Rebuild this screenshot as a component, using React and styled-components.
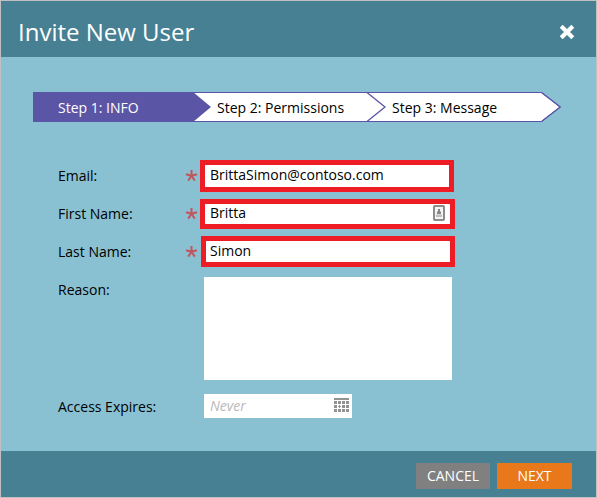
import React from "react";
import styled, { createGlobalStyle } from "styled-components";

const GlobalStyle = createGlobalStyle`
  * { box-sizing: border-box; }
  body { margin: 0; font-family: "Open Sans", "Noto Sans", sans-serif; font-size: 14px; color: #000; }
  button, input, textarea { font: inherit; }
`;

const Dialog = styled.div`
  width: 597px;
  height: 498px;
  border: 1px solid #c0c0c0;
  background: #89c1d2;
  display: flex;
  flex-direction: column;
  overflow: hidden;
`;

const Header = styled.header`
  height: 56px;
  flex: none;
  background: #468092;
  display: flex;
  align-items: center;
  justify-content: space-between;
  padding: 6px 21px 0 17px;
`;

const Title = styled.h1`
  margin: 0;
  font-size: 24px;
  line-height: 32px;
  font-weight: 400;
  color: #fff;
`;

const CloseButton = styled.button`
  width: 16px;
  height: 16px;
  padding: 0;
  border: 0;
  background: none;
  svg { display: block; }
`;

const Body = styled.main`
  flex: 1;
  padding: 35px 0 0 32px;
`;

const Steps = styled.ol`
  list-style: none;
  margin: 0 0 35px;
  padding: 0;
  height: 30px;
  width: 528px;
  display: grid;
  grid-template-columns: 159px 175px 194px;
  position: relative;
`;

const StepShape = styled.svg`
  position: absolute;
  inset: 0;
`;

const Step = styled.li`
  position: relative;
  padding-left: 25px;
  line-height: 31px;
  white-space: nowrap;
  color: ${(p) => (p.$active ? "#fff" : "#000")};
`;

const Form = styled.div`
  padding-left: 25px;
`;

const Row = styled.div`
  display: grid;
  grid-template-columns: 128px 14px 260px;
  height: ${(p) => p.$height || 38}px;
`;

const Label = styled.label`
  line-height: 38px;
`;

const Required = styled.svg`
  display: block;
  margin: 12px 0 0 -1px;
`;

const Outlined = styled.div`
  margin: ${(p) => p.$top}px 0 0 ${(p) => p.$left || 0}px;
  width: ${(p) => p.$width}px;
  height: ${(p) => p.$height}px;
  border: 5px solid #ee1c24;
  background: #fff;
  display: flex;
  justify-content: space-between;
  padding: 0 5px 0 ${(p) => 5 - (p.$left || 0)}px;
`;

const Value = styled.span`
  line-height: 20px;
  margin-top: ${(p) => p.$shift || 0}px;
`;

const Card = styled.svg`
  margin-top: 1px;
  flex: none;
`;

const Reason = styled.textarea`
  display: block;
  margin: 6px 0 0 4px;
  width: 248px;
  height: 103px;
  border: 0;
  background: #fff;
  resize: none;
  outline: 0;
`;

const DateField = styled.div`
  margin: 6px 0 0 4px;
  width: 148px;
  height: 24px;
  background: #fff;
  display: flex;
  justify-content: space-between;
  padding: 0 3px 0 6px;
  line-height: 24px;
  font-style: italic;
  color: #b9b9b9;
`;

const Calendar = styled.svg`
  margin-top: 4px;
`;

const Footer = styled.footer`
  height: 46px;
  flex: none;
  background: #468092;
  display: flex;
  justify-content: flex-end;
  gap: 7px;
  padding: 12px 24px 0 0;
`;

const Button = styled.button`
  width: ${(p) => p.$width}px;
  height: 26px;
  padding: 0;
  border: 0;
  background: ${(p) => (p.$primary ? "#e8781a" : "#808080")};
  color: #fff;
  line-height: 26px;
`;

const Star = () => (
  <Required width="13" height="14" viewBox="0 0 13 14">
    <path d="M6.5 6.8V.9M6.5 6.8L1 5.2M6.5 6.8L12 5.2M6.5 6.8L3.2 11.6M6.5 6.8L9.8 11.6" stroke="#c0555c" strokeWidth="2" fill="none" />
  </Required>
);

export default function App() {
  return (
    <>
      <GlobalStyle />
      <Dialog>
        <Header>
          <Title>Invite New User</Title>
          <CloseButton aria-label="Close">
            <svg width="16" height="16" viewBox="0 0 16 16">
              <path d="M3.7 3.7L12.3 12.3M12.3 3.7L3.7 12.3" stroke="#fff" strokeWidth="4.2" strokeLinecap="square" />
            </svg>
          </CloseButton>
        </Header>
        <Body>
          <Steps>
            <StepShape width="528" height="30" viewBox="0 0 528 30">
              <path d="M.5 .5H508.5L527.2 15L508.5 29.5H.5Z" fill="#fff" stroke="#5b55a5" />
              <path d="M334 .5L352 15L334 29.5M508.5 .5L527.2 15L508.5 29.5" fill="none" stroke="#5b55a5" strokeWidth="1.3" />
              <path d="M0 0H160L178 15L160 30H0Z" fill="#5b55a5" />
            </StepShape>
            <Step $active>Step 1: INFO</Step>
            <Step>Step 2: Permissions</Step>
            <Step>Step 3: Message</Step>
          </Steps>
          <Form>
            <Row>
              <Label>Email:</Label>
              <Star />
              <Outlined $top={3} $width={254} $height={32}>
                <Value>BrittaSimon@contoso.com</Value>
              </Outlined>
            </Row>
            <Row>
              <Label>First Name:</Label>
              <Star />
              <Outlined $top={4} $width={255} $height={30}>
                <Value $shift={-1}>Britta</Value>
                <Card width="12" height="16" viewBox="0 0 12 16">
                  <rect x="1" y="1" width="10" height="14" rx=".7" fill="#f4f4f4" stroke="#8c8c8c" strokeWidth="2" />
                  <rect x="3" y="9.5" width="6" height="2.5" fill="#bdbdbd" />
                  <path d="M5 4H7V6.5H8V9H4V6.5H5Z" fill="#858585" />
                </Card>
              </Outlined>
            </Row>
            <Row>
              <Label>Last Name:</Label>
              <Star />
              <Outlined $top={3} $left={1} $width={254} $height={31}>
                <Value>Simon</Value>
              </Outlined>
            </Row>
            <Row $height={117}>
              <Label>Reason:</Label>
              <span />
              <Reason aria-label="Reason" />
            </Row>
            <Row>
              <Label>Access Expires:</Label>
              <span />
              <DateField>
                Never
                <Calendar width="15" height="14" viewBox="0 0 15 14" fill="#929292">
                  <path d="M0 0H15V2H0Z" />
                  <path d="M0 3h3v3h-3zM4 3h3v3h-3zM8 3h3v3h-3zM12 3h3v3h-3zM0 7h3v3h-3zM8 7h3v3h-3zM12 7h3v3h-3zM0 11h3v3h-3zM4 11h3v3h-3zM8 11h3v3h-3zM12 11h3v3h-3z" />
                  <path d="M5 7h1v1h1v1h-1v1h-1v-1h-1v-1h1z" />
                </Calendar>
              </DateField>
            </Row>
          </Form>
        </Body>
        <Footer>
          <Button $width={74}>CANCEL</Button>
          <Button $width={75} $primary>NEXT</Button>
        </Footer>
      </Dialog>
    </>
  );
}
